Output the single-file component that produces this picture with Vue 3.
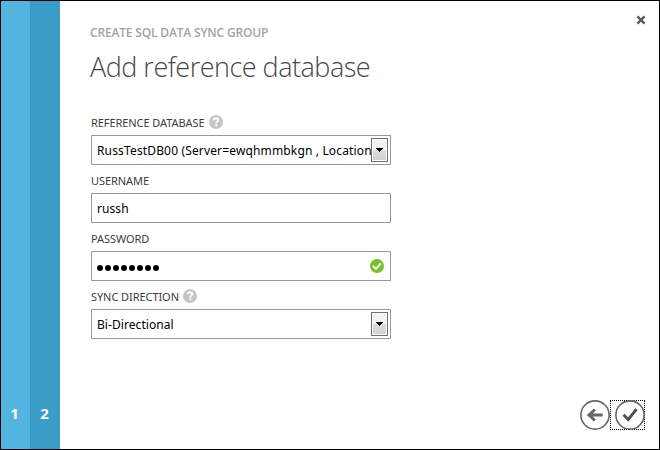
<script setup>
const fields = [
  { id: 'db', label: 'REFERENCE DATABASE', help: true, type: 'select', value: 'RussTestDB00 (Server=ewqhmmbkgn , Location' },
  { id: 'user', label: 'USERNAME', type: 'text', value: 'russh' },
  { id: 'pass', label: 'PASSWORD', type: 'password', dots: 8 },
  { id: 'sync', label: 'SYNC DIRECTION', help: true, type: 'select', value: 'Bi-Directional' },
]
</script>

<template>
  <div class="dialog">
    <nav class="steps">
      <div class="step first">1</div>
      <div class="step second">2</div>
    </nav>
    <main class="content">
      <div class="eyebrow">CREATE SQL DATA SYNC GROUP</div>
      <h1 class="title">Add reference database</h1>
      <form class="form">
        <div v-for="f in fields" :key="f.id" class="field">
          <div class="label-row">
            <span class="label">{{ f.label }}</span>
            <svg v-if="f.help" class="help" viewBox="0 0 14 14">
              <circle cx="7" cy="7" r="7" fill="#c6c6c6" />
              <path d="M4.7 5.3C4.7 3.8 5.7 3.2 7 3.2S9.3 3.9 9.3 5.1C9.3 6.5 7.2 6.5 7.2 8.4M7.2 9.4V11.2" fill="none" stroke="#fff" stroke-width="1.9" />
            </svg>
          </div>
          <div class="box">
            <span v-if="f.type !== 'password'" class="value" :class="f.id">{{ f.value }}</span>
            <span v-else class="dots"><i v-for="n in f.dots" :key="n" class="dot"></i></span>
            <span v-if="f.type === 'select'" class="arrow">
              <svg viewBox="0 0 7 4" shape-rendering="crispEdges"><path d="M0 0H7V1H6V2H5V3H4V4H3V3H2V2H1V1H0Z" fill="#000" /></svg>
            </span>
            <svg v-if="f.type === 'password'" class="valid" viewBox="0 0 14 14">
              <circle cx="7" cy="7" r="7" fill="#78be2c" />
              <path d="M2.9 7L6 9.9L10.8 4.4" fill="none" stroke="#fff" stroke-width="2" />
            </svg>
          </div>
        </div>
      </form>
    </main>
    <aside class="side">
      <svg class="close" viewBox="0 0 10 10"><path d="M1.4 1.4L8.6 8.6M8.6 1.4L1.4 8.6" stroke="#5c5c5c" stroke-width="2.5" /></svg>
      <div class="actions">
        <svg class="back" viewBox="0 0 30 30">
          <circle cx="15" cy="15" r="14.1" fill="none" stroke="#666" stroke-width="1.6" />
          <path d="M22.7 15H9M14.9 9.5L9 15L14.9 20.5" fill="none" stroke="#666" stroke-width="3" />
        </svg>
        <span class="focus">
          <svg class="ok" viewBox="0 0 30 30">
            <circle cx="15" cy="15" r="14.1" fill="none" stroke="#666" stroke-width="1.6" />
            <path d="M8.5 14.7L13.3 19.5L21.5 9.2" fill="none" stroke="#505050" stroke-width="2.9" />
          </svg>
        </span>
      </div>
    </aside>
  </div>
</template>

<style>
body { margin: 0; overflow: hidden; background: #fff; }
</style>

<style scoped>
.dialog { box-sizing: border-box; width: 660px; height: 450px; border: 1px solid #000; background: #fff; display: flex; font-family: "Noto Sans", "Open Sans", sans-serif; }
.steps { display: flex; }
.step { box-sizing: border-box; display: flex; align-items: flex-end; justify-content: center; padding-bottom: 26px; color: #fff; font-size: 15px; line-height: 20px; font-weight: 700; }
.first { width: 29px; background: #52b5e0; padding-right: 2px; }
.second { width: 30px; background: #3a9dc8; padding-right: 1px; }
.content { padding: 22px 0 0 31px; width: 300px; }
.eyebrow { color: #a3a3a3; font-family: "Open Sans", sans-serif; font-size: 12px; line-height: 20px; font-weight: 600; white-space: nowrap; letter-spacing: -0.17px; margin-left: -1px; }
.title { margin: 4px 0 0 -1px; color: #484848; font-family: "Open Sans", sans-serif; font-size: 27px; line-height: 40px; font-weight: 300; white-space: nowrap; letter-spacing: -0.5px; }
.form { margin-top: 21px; }
.field { height: 58px; }
.label-row { box-sizing: border-box; height: 27px; display: flex; align-items: center; gap: 4px; padding-top: 3px; }
.label { color: #3c3c3c; font-size: 11px; line-height: 20px; white-space: nowrap; letter-spacing: -0.07px; }
.help { width: 14px; height: 14px; margin-top: -2px; }
.box { box-sizing: border-box; width: 300px; height: 30px; border: 1px solid #999; display: flex; align-items: center; padding: 0 2px 0 5px; }
.value { flex: 1; width: 0; color: #000; font-size: 12px; line-height: 20px; white-space: nowrap; letter-spacing: 0.07px; padding-top: 1px; }
.value.db { letter-spacing: 0.15px; }
.arrow { box-sizing: border-box; width: 17px; height: 24px; border: 1px solid #707070; box-shadow: inset 0 0 0 1px #fafafa; background: linear-gradient(#f2f2f2 0 50%, #dedede 50%, #cfcfcf); display: flex; align-items: center; justify-content: center; }
.arrow svg { width: 7px; height: 4px; }
.dots { flex: 1; display: flex; gap: 2px; padding: 4px 0 0; }
.dot { width: 6px; height: 6px; border-radius: 50%; background: #000; }
.valid { width: 14px; height: 14px; margin-right: 4px; }
.side { flex: 1; display: flex; flex-direction: column; justify-content: space-between; align-items: flex-end; }
.close { width: 10px; height: 10px; margin: 14px 13px 0 0; }
.actions { display: flex; padding: 0 14px 19px 0; }
.back { width: 30px; height: 30px; }
.focus { box-sizing: border-box; width: 35px; height: 30px; border: 1px dotted #000; display: flex; justify-content: flex-end; }
.ok { width: 30px; height: 30px; margin: -1px; flex: none; }
</style>
